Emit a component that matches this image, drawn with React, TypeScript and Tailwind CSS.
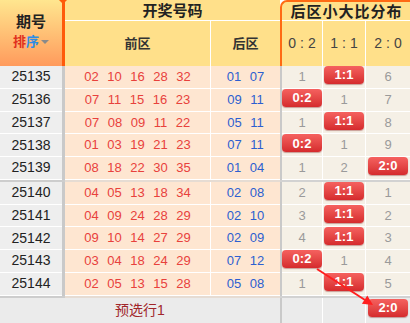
type Row = { no: string; front: string[]; back: string[]; dist: (number | string)[] };

const rows: Row[] = [
  { no: "25135", front: ["02", "10", "16", "28", "32"], back: ["01", "07"], dist: [1, "1:1", 6] },
  { no: "25136", front: ["07", "11", "15", "16", "23"], back: ["09", "11"], dist: ["0:2", 1, 7] },
  { no: "25137", front: ["07", "08", "09", "11", "22"], back: ["05", "11"], dist: [1, "1:1", 8] },
  { no: "25138", front: ["01", "03", "19", "21", "23"], back: ["07", "11"], dist: ["0:2", 1, 9] },
  { no: "25139", front: ["08", "18", "22", "30", "35"], back: ["01", "04"], dist: [1, 2, "2:0"] },
  { no: "25140", front: ["04", "05", "13", "18", "34"], back: ["02", "08"], dist: [2, "1:1", 1] },
  { no: "25141", front: ["04", "09", "24", "28", "29"], back: ["02", "10"], dist: [3, "1:1", 2] },
  { no: "25142", front: ["09", "10", "14", "27", "29"], back: ["02", "09"], dist: [4, "1:1", 3] },
  { no: "25143", front: ["03", "04", "18", "24", "29"], back: ["07", "12"], dist: ["0:2", 1, 4] },
  { no: "25144", front: ["02", "05", "13", "15", "28"], back: ["05", "08"], dist: [1, "1:1", 5] },
];

const distWidths = ["w-[41px] border-r", "w-[43px] border-r", "flex-1"];

function Badge({ label }: { label: string }) {
  return (
    <span className="flex h-[18px] w-[40px] items-center justify-center rounded-[4px] bg-gradient-to-b from-[#f5615f] to-[#d52a2d] text-[13px] font-bold text-white shadow-[0_1px_1px_rgba(120,0,0,0.35)]">
      {label}
    </span>
  );
}

function Header() {
  return (
    <div className="flex h-[66px]">
      <div className="flex w-[62px] flex-col items-center bg-gradient-to-b from-[#ffe68f] to-[#ff9a5c] pt-[11px]">
        <span className="text-[15px] font-bold leading-[22px] text-[#222]">期号</span>
        <span className="flex items-center text-[13px] font-bold leading-[18px]">
          <span className="text-[#e0301e]">排</span>
          <span className="text-[#2b8de6]">序</span>
          <span className="ml-[2px] border-x-[4px] border-t-[4px] border-x-transparent border-t-[#8a8a8a]" />
        </span>
      </div>
      <div className="relative w-[3px] bg-[#ff5a0a]">
        <span className="absolute -left-[3px] top-0 border-x-[4.5px] border-t-[4px] border-x-transparent border-t-[#ff5a0a]" />
      </div>
      <div className="flex w-[215px] flex-col bg-[#ffe08a]">
        <div className="h-[21px] border-b border-white text-center text-[15px] font-bold leading-[21px] text-[#222]">
          开奖号码
        </div>
        <div className="flex flex-1 text-[13px] font-bold text-[#333]">
          <div className="flex w-[146px] items-center justify-center border-r border-white">前区</div>
          <div className="flex flex-1 items-center justify-center">后区</div>
        </div>
      </div>
      <div className="flex flex-1 flex-col rounded-tl-[7px] border-l-2 border-t-2 border-[#ff6a14] bg-[#ffe08a]">
        <div className="h-[19px] border-b border-white pl-[1px] text-center text-[15px] font-bold leading-[19px] tracking-[1px] text-[#222]">
          后区小大比分布
        </div>
        <div className="flex flex-1 text-[14px] text-[#444]">
          {["0:2", "1:1", "2:0"].map((t, i) => (
            <div key={t} className={`flex items-center justify-center border-white pl-[4px] tracking-[4px] ${distWidths[i]}`}>
              {t}
            </div>
          ))}
        </div>
      </div>
    </div>
  );
}

function DataRow({ row }: { row: Row }) {
  return (
    <div className="flex h-[22.75px]">
      <div className="flex w-[62px] items-center justify-center border-b border-white bg-[#eeeeee] text-[14px] text-[#222]">
        {row.no}
      </div>
      <div className="w-[3px] bg-[#c9c9c9]" />
      <div className="flex w-[146px] items-center justify-center gap-[8.5px] border-b border-r border-white bg-[#fee6d1] text-[13px] text-[#e8413c]">
        {row.front.map((n, i) => (
          <span key={i}>{n}</span>
        ))}
      </div>
      <div className="flex w-[69px] items-center justify-center gap-[8.5px] border-b border-white bg-[#fee6d1] text-[13px] text-[#2d5fd0]">
        {row.back.map((n, i) => (
          <span key={i}>{n}</span>
        ))}
      </div>
      <div className="w-[2px] bg-[#c9c9c9]" />
      {row.dist.map((d, i) => (
        <div
          key={i}
          className={`flex justify-center border-b border-white bg-[#f5f0e6] text-[13px] text-[#9a9a9a] ${distWidths[i]} ${
            typeof d === "string" ? "items-start" : "items-center"
          }`}
        >
          {typeof d === "string" ? <Badge label={d} /> : d}
        </div>
      ))}
    </div>
  );
}

function Separator() {
  return (
    <div className="flex h-[2px]">
      <div className="w-[65px] bg-[#cdcdcd]" />
      <div className="w-[215px] bg-[#e6dcd3]" />
      <div className="flex-1 bg-[#d2d2d2]" />
    </div>
  );
}

export default function App() {
  return (
    <div className="relative h-[323px] w-[410px] overflow-hidden bg-white font-['Liberation_Sans','Noto_Sans_CJK_SC',sans-serif]">
      <Header />
      {rows.slice(0, 5).map((r) => (
        <DataRow key={r.no} row={r} />
      ))}
      <Separator />
      {rows.slice(5).map((r) => (
        <DataRow key={r.no} row={r} />
      ))}
      <Separator />
      <div className="flex h-[26px]">
        <div className="flex w-[280px] items-center justify-center bg-[#ebebeb] text-[14px] text-[#a1262a]">预选行1</div>
        <div className="w-[2px] bg-[#c9c9c9]" />
        <div className="w-[41px] border-r border-white bg-[#ebebeb]" />
        <div className="w-[43px] border-r border-white bg-[#ebebeb]" />
        <div className="flex flex-1 justify-center bg-[#ebebeb] pt-[1px]">
          <Badge label="2:0" />
        </div>
      </div>
      <svg className="pointer-events-none absolute left-0 top-0" width="410" height="323">
        <line x1="317" y1="269" x2="365" y2="300" stroke="#ff1f1f" strokeWidth="2" />
        <polygon points="373,305 361.9,303.8 367.3,295.4" fill="#ff1f1f" />
      </svg>
    </div>
  );
}
